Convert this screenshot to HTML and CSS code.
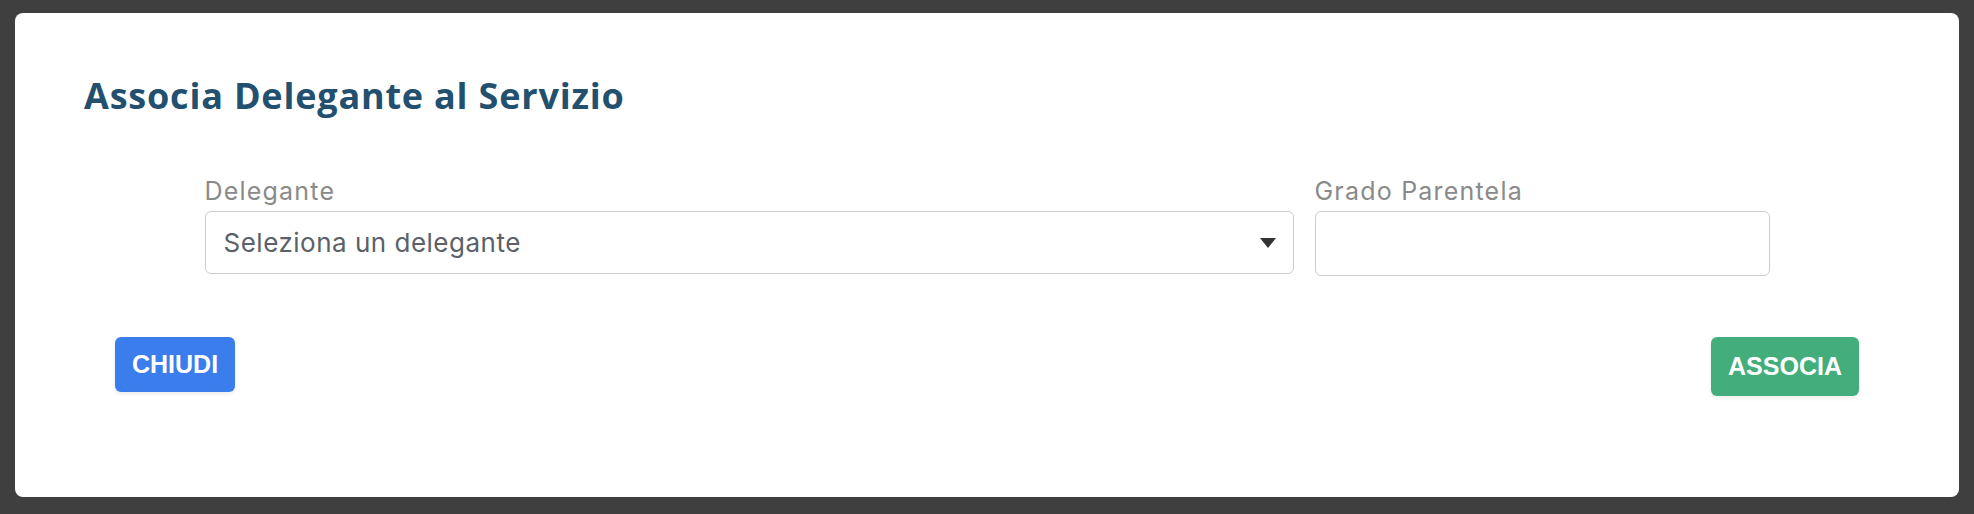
FILE: index.html
```html
<!DOCTYPE html>
<html lang="it">
<head>
    <meta charset="UTF-8">
    <meta name="viewport" content="width=device-width, initial-scale=1.0">
    <title>Associa Delegante</title>
    <link rel="stylesheet" href="styles.css">
</head>
<body>
    <div class="backdrop">
        <div class="modal">
            <h2 class="modal-title">Associa Delegante al Servizio</h2>
            <div class="form-row">
                <div class="field">
                    <label for="delegante">Delegante</label>
                    <div class="select" id="delegante">
                        <span>Seleziona un delegante</span>
                        <span class="caret"></span>
                    </div>
                </div>
                <div class="field">
                    <label for="grado">Grado Parentela</label>
                    <input type="text" id="grado">
                </div>
            </div>
            <div class="actions">
                <button class="btn btn-close">CHIUDI</button>
                <button class="btn btn-save">ASSOCIA</button>
            </div>
        </div>
    </div>
</body>
</html>
```

FILE: styles.css
```css
html, body {
    margin: 0;
    height: 514px;
    overflow: hidden;
}
body {
    background: #3f3f3f;
    font-family: Inter, "Noto Sans", sans-serif;
}
.backdrop {
    padding: 13px 15px 0 15px;
}
.modal {
    background: #fff;
    border-radius: 8px;
    height: 484px;
    box-sizing: border-box;
    padding: 0 100px;
    display: flex;
    flex-direction: column;
}
.modal-title {
    font-family: "Open Sans", sans-serif;
    font-weight: 700;
    font-size: 36px;
    line-height: 42px;
    letter-spacing: 0.8px;
    color: #22506e;
    margin: 62px 0 0 -31px;
}
.form-row {
    display: grid;
    grid-template-columns: 1089px 455px;
    gap: 21px;
    justify-content: center;
    margin: 59px -100px 0;
}
.field label {
    display: block;
    font-size: 25px;
    line-height: 30px;
    letter-spacing: 1.2px;
    color: #8a8a8a;
    margin-bottom: 5px;
}
.select {
    height: 63px;
    box-sizing: border-box;
    border: 1px solid #cccccc;
    border-radius: 6px;
    padding: 0 17px 0 18px;
    display: flex;
    align-items: center;
    justify-content: space-between;
    font-size: 26px;
    letter-spacing: 0.5px;
    color: #5b6168;
}
.caret {
    width: 0;
    height: 0;
    border-left: 8px solid transparent;
    border-right: 8px solid transparent;
    border-top: 10px solid #333;
}
.field input {
    width: 100%;
    height: 65px;
    box-sizing: border-box;
    border: 1px solid #cccccc;
    border-radius: 6px;
    margin: 0;
}
.actions {
    display: flex;
    justify-content: space-between;
    align-items: flex-start;
    margin-top: 61px;
}
.btn {
    font-family: "Liberation Sans", Arial, sans-serif;
    font-weight: 700;
    font-size: 25px;
    color: #fff;
    border: none;
    border-radius: 6px;
    padding: 0 17px;
    box-shadow: 0 2px 4px rgba(0, 0, 0, 0.08);
    cursor: pointer;
}
.btn-close {
    background: #3b7ded;
    height: 55px;
    width: 120px;
}
.btn-save {
    background: #43ae7b;
    height: 59px;
    width: 148px;
}
```
